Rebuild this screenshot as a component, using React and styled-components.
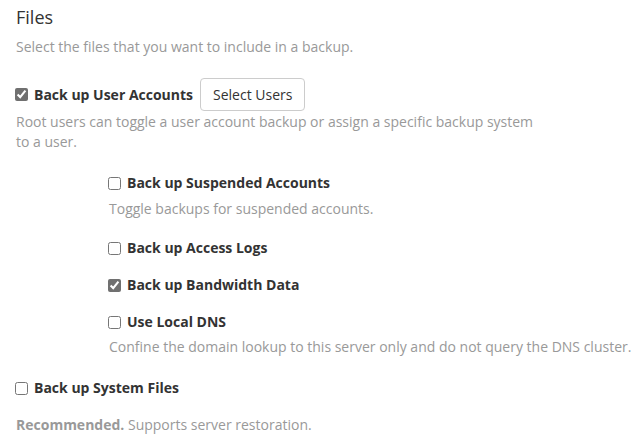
import React from 'react';
import styled, { createGlobalStyle } from 'styled-components';

const GlobalStyle = createGlobalStyle`
  body {
    margin: 0;
    background: #fff;
    font-family: 'Open Sans', sans-serif;
    color: #333;
  }
`;

const Section = styled.div`
  padding: 7px 0 0 16px;
`;

const Title = styled.h3`
  font-size: 18px;
  font-weight: 400;
  line-height: 20px;
  margin: 0 0 10px;
  color: #333;
`;

const Help = styled.p`
  font-size: 14px;
  line-height: 20px;
  color: #999;
  margin: ${(p) => p.$mt || 0}px 0 0;
  max-width: ${(p) => p.$max || 'none'};
  b {
    font-weight: 700;
  }
`;

const Group = styled.div`
  margin-left: ${(p) => p.$indent || 0}px;
  margin-top: ${(p) => p.$mt || 0}px;
`;

const Row = styled.div`
  display: flex;
  align-items: center;
  gap: 7px;
  height: ${(p) => p.$h || 20}px;
`;

const Label = styled.label`
  display: flex;
  align-items: center;
  gap: 6px;
  font-size: 14px;
  font-weight: 700;
  line-height: 20px;
  color: #333;
  white-space: nowrap;
`;

const Check = styled.input.attrs({ type: 'checkbox' })`
  width: 13px;
  height: 13px;
  margin: 0 0 0 -1px;
  accent-color: #707070;
`;

const Button = styled.button`
  font-family: 'Open Sans', sans-serif;
  font-size: 14px;
  color: #333;
  background: #fff;
  border: 1px solid #ccc;
  border-radius: 4px;
  height: 33px;
  padding: 0 12px;
`;

function Option({ label, checked, children, indent, mt, helpMt = 6 }) {
  return (
    <Group $indent={indent} $mt={mt}>
      <Row>
        <Label>
          <Check defaultChecked={checked} />
          {label}
        </Label>
      </Row>
      {children && <Help $mt={helpMt}>{children}</Help>}
    </Group>
  );
}

export default function App() {
  return (
    <>
      <GlobalStyle />
      <Section>
        <Title>Files</Title>
        <Help>Select the files that you want to include in a backup.</Help>

        <Group $mt={21}>
          <Row $h={33}>
            <Label>
              <Check defaultChecked />
              Back up User Accounts
            </Label>
            <Button>Select Users</Button>
          </Row>
          <Help $mt={1} $max="530px">
            Root users can toggle a user account backup or assign a specific backup system to a user.
          </Help>
        </Group>

        <Option indent={93} mt={21} label="Back up Suspended Accounts">
          Toggle backups for suspended accounts.
        </Option>
        <Option indent={93} mt={19} label="Back up Access Logs" />
        <Option indent={93} mt={17} label="Back up Bandwidth Data" checked />
        <Option indent={93} mt={17} label="Use Local DNS" helpMt={5}>
          Confine the domain lookup to this server only and do not query the DNS cluster.
        </Option>
        <Option mt={21} label="Back up System Files" helpMt={17}>
          <b>Recommended.</b> Supports server restoration.
        </Option>
      </Section>
    </>
  );
}
